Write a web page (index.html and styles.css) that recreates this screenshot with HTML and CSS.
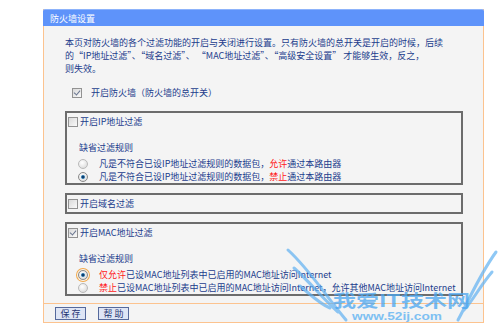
FILE: index.html
```html
<!DOCTYPE html>
<html>

<head>
    <title>防火墙设置</title>
    <link rel="stylesheet" href="styles.css">
</head>

<body>
    <div class="panel">
        <div class="title">防火墙设置</div>

        <div class="content">
            <p class="desc">本页对防火墙的各个过滤功能的开启与关闭进行设置。只有防火墙的总开关是开启的时候，后续<br>的“IP地址过滤”、“域名过滤”、 “MAC地址过滤”、“高级安全设置” 才能够生效，反之，<br>则失效。</p>

            <div class="main-switch">
                <span class="cb checked"></span>
                <span class="main-label">开启防火墙（防火墙的总开关）</span>
            </div>

            <div class="group">
                <div class="group-head"><span class="cb"></span>开启IP地址过滤</div>
                <div class="rule-title">缺省过滤规则</div>
                <div class="rule"><span class="radio"></span>凡是不符合已设IP地址过滤规则的数据包，<span class="red">允许</span>通过本路由器</div>
                <div class="rule"><span class="radio on"></span>凡是不符合已设IP地址过滤规则的数据包，<span class="red">禁止</span>通过本路由器</div>
            </div>

            <div class="group small">
                <div class="group-head"><span class="cb"></span>开启域名过滤</div>
            </div>

            <div class="group">
                <div class="group-head"><span class="cb checked"></span>开启MAC地址过滤</div>
                <div class="rule-title">缺省过滤规则</div>
                <div class="rule"><span class="radio on focus"></span><span class="red">仅允许</span>已设MAC地址列表中已启用的MAC地址访问Internet</div>
                <div class="rule"><span class="radio"></span><span class="red">禁止</span>已设MAC地址列表中已启用的MAC地址访问Internet，允许其他MAC地址访问Internet</div>
            </div>
        </div>

        <div class="footer">
            <button class="btn">保 存</button>
            <button class="btn">帮 助</button>
        </div>
    </div>

    <!-- watermark over the page -->
    <svg class="watermark" width="220" height="91" viewBox="0 0 220 91">
        <g fill="none" stroke="#5fb1f2" stroke-width="3" stroke-linecap="round" opacity="0.7">
            <path d="M8 10 C30 30 45 55 66 80"/>
            <path d="M14 28 C30 42 42 58 58 72"/>
            <path d="M20 46 C32 56 40 64 50 68"/>
            <path d="M216 12 C200 34 190 58 178 80"/>
            <path d="M212 32 C200 46 192 62 184 70"/>
        </g>
        <text x="53" y="67" class="wm-big" textLength="137" lengthAdjust="spacingAndGlyphs">我爱IT技术网</text>
        <text x="72" y="80" class="wm-url" textLength="90" lengthAdjust="spacingAndGlyphs">www.52ij.com</text>
    </svg>
</body>
</html>
```

FILE: styles.css
```css
body {
    margin: 0;
    background: #ffffff;
    font-family: "Noto Sans CJK SC", sans-serif;
    font-size: 9px;
    color: #1b3c8c;
    position: relative;
    height: 331px;
    overflow: hidden;
}

.panel {
    margin: 9px 0 0 43px;
    width: 441px;
    background: #f4f4f4;
    border: 1px solid #fcc38f;
    border-top: none;
    box-sizing: border-box;
}

.title {
    margin: 0 -1px;
    height: 17px;
    line-height: 17px;
    padding-left: 7px;
    background: #5e93fa;
    border-top: 1px solid #8db3fb;
    border-radius: 2px 2px 0 0;
    color: #ffffff;
    box-sizing: border-box;
}

.content {
    padding: 0 21px 7px 21px;
}

.desc {
    margin: 10px 0 0 0;
    line-height: 13px;
}

.main-switch {
    margin: 11px 0 0 7px;
    height: 13px;
    line-height: 13px;
    display: flex;
    align-items: center;
}

.main-label {
    margin-left: 9px;
}

.group {
    margin-top: 12px;
    width: 398px;
    border: 2px solid #6c6c6c;
    padding: 3px 0 0 1px;
    box-sizing: border-box;
}

.group + .group {
    margin-top: 8px;
}

.group.small {
    padding-bottom: 2px;
}

.group-head {
    height: 12px;
    line-height: 12px;
    display: flex;
    align-items: center;
}

.group-head .cb {
    margin: 0 2px 0 0;
}

.rule-title {
    margin-top: 14px;
    padding-left: 11px;
    line-height: 12px;
}

.rule {
    height: 12px;
    line-height: 12px;
    display: flex;
    align-items: center;
    margin-top: 1px;
}

.rule-title + .rule {
    margin-top: 4px;
}

.rule .radio {
    margin: 0 11px 0 10px;
}

.red {
    color: #ff1a1a;
}

/* fake checkbox */
.cb {
    display: inline-block;
    width: 10px;
    height: 10px;
    border: 1px solid #929292;
    background: linear-gradient(135deg, #d9d9d9, #fafafa);
    box-sizing: border-box;
    position: relative;
    flex: none;
}

.cb.checked::after {
    content: "";
    position: absolute;
    left: 2px;
    top: 0px;
    width: 3px;
    height: 5px;
    border: solid #6a7690;
    border-width: 0 1px 1px 0;
    transform: rotate(40deg);
}

/* fake radio */
.radio {
    display: inline-block;
    width: 10px;
    height: 10px;
    border-radius: 50%;
    border: 1px solid #b9b9b9;
    background: radial-gradient(circle at 40% 35%, #ffffff, #d4d4d4);
    box-sizing: border-box;
    position: relative;
    flex: none;
}

.radio.on {
    border-color: #8a8a8a;
}

.radio.on::after {
    content: "";
    position: absolute;
    left: 2px;
    top: 2px;
    width: 4px;
    height: 4px;
    border-radius: 50%;
    background: radial-gradient(circle, #0b3d6e 30%, #3d9bd6 80%);
}

.radio.focus {
    box-shadow: 0 0 0 1px #f5f5f5, 0 0 0 2px #f2a94a;
}

.footer {
    border-top: 1px solid #fcc38f;
    padding: 3px 0 2px 11px;
    display: flex;
    gap: 12px;
}

.btn {
    width: 31px;
    height: 13px;
    padding: 0;
    font-family: "Noto Sans CJK SC", sans-serif;
    font-size: 9px;
    line-height: 11px;
    color: #1f3472;
    background: #dee5f5;
    border: 1px solid #55699c;
}

.watermark {
    position: absolute;
    left: 280px;
    top: 240px;
}

.wm-big {
    font-family: "Noto Sans CJK SC", sans-serif;
    font-size: 17px;
    font-weight: bold;
    fill: #4aa6f0;
    opacity: 0.75;
}

.wm-url {
    font-family: "Liberation Sans", sans-serif;
    font-size: 10px;
    font-weight: bold;
    fill: #6ab8f2;
    opacity: 0.85;
}
```
